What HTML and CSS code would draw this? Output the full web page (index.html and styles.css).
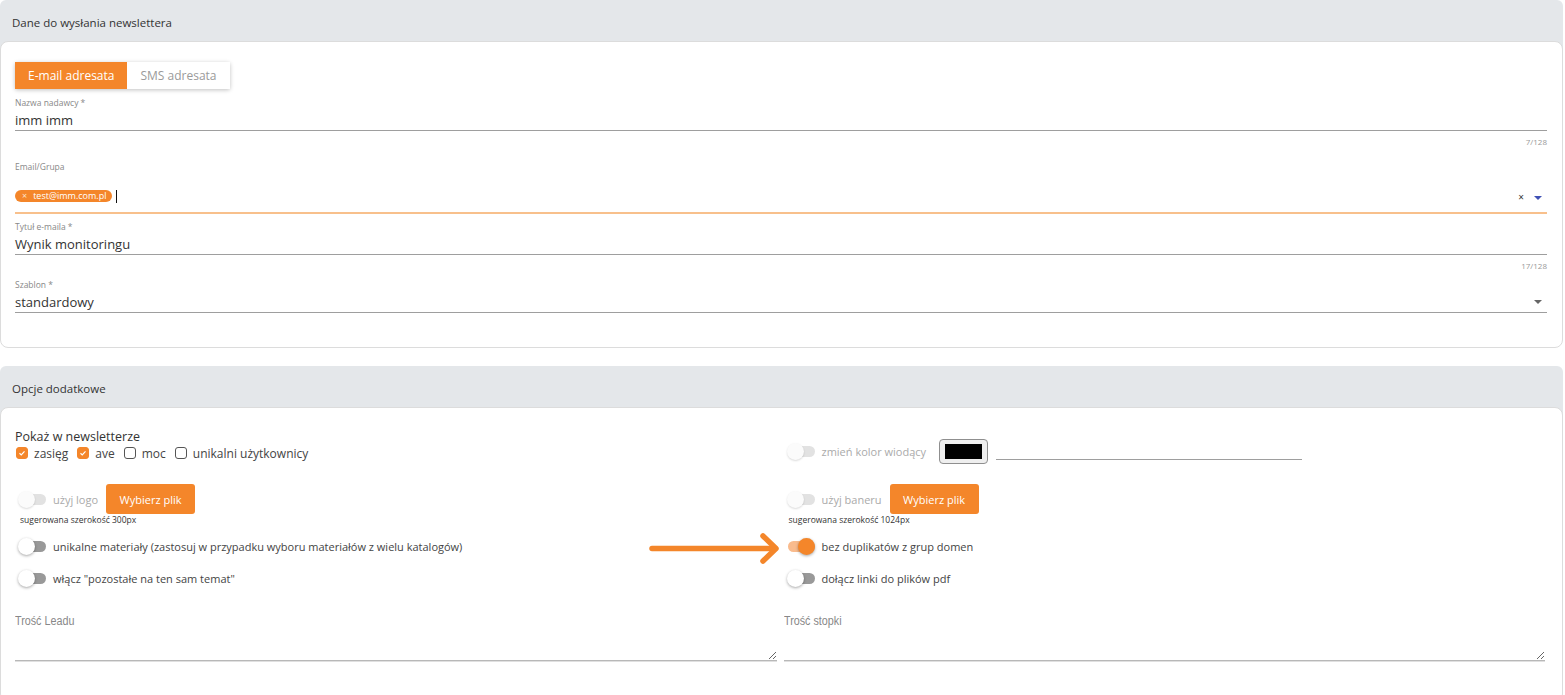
FILE: index.html
```html
<!DOCTYPE html>
<html>

<head>
  <title>Newsletter</title>
  <link rel="stylesheet" href="styles.css">
</head>

<body>
  <div class="page">
    <!-- dane do wysłania -->
    <section class="card">
      <div class="card-title">Dane do wysłania newslettera</div>
      <div class="card-body send">
        <div class="tabs">
          <span class="tab active">E-mail adresata</span>
          <span class="tab">SMS adresata</span>
        </div>

        <div class="field">
          <div class="field-label">Nazwa nadawcy *</div>
          <div class="field-input">imm imm</div>
          <div class="field-hint">7/128</div>
        </div>

        <div class="field field-email">
          <div class="field-label">Email/Grupa</div>
          <div class="field-input chips">
            <span class="chip"><span class="chip-x">×</span>test@imm.com.pl</span>
            <span class="cursor"></span>
            <span class="field-icons">
              <span class="clear">×</span>
              <span class="caret blue"></span>
            </span>
          </div>
        </div>

        <div class="field field-title">
          <div class="field-label">Tytuł e-maila *</div>
          <div class="field-input">Wynik monitoringu</div>
          <div class="field-hint">17/128</div>
        </div>

        <div class="field field-template">
          <div class="field-label">Szablon *</div>
          <div class="field-input select">
            <span>standardowy</span>
            <span class="field-icons"><span class="caret"></span></span>
          </div>
        </div>
      </div>
    </section>

    <!-- opcje -->
    <section class="card">
      <div class="card-title">Opcje dodatkowe</div>
      <div class="card-body options">
        <div class="opt-row first">
          <div>
            <div class="opt-title">Pokaż w newsletterze</div>
            <div class="checks">
              <span class="check on"><svg viewBox="0 0 12 12"><path d="M3 6.3l2.1 2L9 4" /></svg></span>
              <span class="check-label">zasięg</span>
              <span class="check on"><svg viewBox="0 0 12 12"><path d="M3 6.3l2.1 2L9 4" /></svg></span>
              <span class="check-label">ave</span>
              <span class="check"></span>
              <span class="check-label">moc</span>
              <span class="check"></span>
              <span class="check-label">unikalni użytkownicy</span>
            </div>
          </div>
          <div class="switch-row color-row">
            <span class="switch disabled"></span>
            <span class="switch-label muted">zmień kolor wiodący</span>
            <span class="color-box"><span></span></span>
            <span class="color-line"></span>
          </div>
        </div>

        <div class="opt-row files">
          <div>
            <div class="switch-row">
              <span class="switch disabled"></span>
              <span class="switch-label muted">użyj logo</span>
              <button class="file-button">Wybierz plik</button>
            </div>
            <div class="size-hint">sugerowana szerokość 300px</div>
          </div>
          <div>
            <div class="switch-row">
              <span class="switch disabled"></span>
              <span class="switch-label muted">użyj baneru</span>
              <button class="file-button">Wybierz plik</button>
            </div>
            <div class="size-hint">sugerowana szerokość 1024px</div>
          </div>
        </div>

        <div class="opt-row">
          <div class="switch-row">
            <span class="switch"></span>
            <span class="switch-label">unikalne materiały (zastosuj w przypadku wyboru materiałów z wielu katalogów)</span>
          </div>
          <div class="switch-row">
            <span class="switch on"></span>
            <span class="switch-label">bez duplikatów z grup domen</span>
          </div>
        </div>

        <div class="opt-row">
          <div class="switch-row">
            <span class="switch"></span>
            <span class="switch-label">włącz "pozostałe na ten sam temat"</span>
          </div>
          <div class="switch-row">
            <span class="switch"></span>
            <span class="switch-label">dołącz linki do plików pdf</span>
          </div>
        </div>

        <div class="opt-row texts">
          <div>
            <div class="ta-label">Trość Leadu</div>
            <textarea class="ta"></textarea>
          </div>
          <div>
            <div class="ta-label">Trość stopki</div>
            <textarea class="ta"></textarea>
          </div>
        </div>

        <!-- strzałka z adnotacji -->
        <svg class="arrow" width="136" height="36" viewBox="0 0 136 36">
          <path d="M4 17.5H127" />
          <path d="M115 5l13 12.5-13 12.5" />
        </svg>
      </div>
    </section>
  </div>
</body>

</html>
```

FILE: styles.css
```css
body,
html {
  margin: 0;
  background: #fff;
}

body {
  font-family: "Open Sans", "Liberation Sans", sans-serif;
  color: #444;
}

.page {
  width: 1563px;
}

/* karta */
.card {
  margin-bottom: 18px;
}

.card-title {
  background: #e4e7ea;
  border-radius: 6px 6px 0 0;
  font-size: 11.5px;
  line-height: 14px;
  color: #333;
  padding: 16px 12px 19px;
  margin-bottom: -8px;
}

.card-body {
  position: relative;
  background: #fff;
  border: 1px solid #dcdcdc;
  border-radius: 8px;
  padding: 20px 15px 0 14px;
}

.send {
  padding-bottom: 34px;
}

/* zakładki */
.tabs {
  display: inline-flex;
  box-shadow: 0 1px 4px rgba(0, 0, 0, 0.25);
  border-radius: 2px;
}

.tab {
  padding: 0 13px;
  line-height: 27px;
  font-size: 12px;
  color: #9a9a9a;
  background: #fff;
}

.tab.active {
  background: #f4862a;
  color: #fff;
}

/* pola formularza */
.field {
  margin-top: 9px;
}

.field-email {
  margin-top: 15px;
}

.field-title {
  margin-top: 8px;
}

.field-label {
  font-size: 8.5px;
  line-height: 10px;
  color: #888;
}

.field-input {
  display: flex;
  align-items: center;
  height: 20px;
  padding-top: 2px;
  line-height: 20px;
  font-size: 13px;
  color: #333;
  border-bottom: 1px solid #9e9e9e;
}

.field-hint {
  margin-top: 6px;
  font-size: 8px;
  line-height: 10px;
  color: #999;
  text-align: right;
}

.chips {
  height: 40px;
  padding: 0;
  align-items: flex-end;
  border-bottom: 2px solid #f8c08c;
}

.chips>* {
  margin-bottom: 10px;
}

.chip {
  display: inline-flex;
  align-items: center;
  height: 12px;
  padding: 0 6px 0 7px;
  border-radius: 6px;
  background: #f4862a;
  color: #fff;
  font-size: 9px;
  line-height: 12px;
}

.chip-x {
  margin-right: 6px;
  color: #fde3cc;
}

.cursor {
  width: 1px;
  height: 13px;
  background: #111;
  margin-left: 4px;
  margin-bottom: 9px !important;
}

.field-icons {
  margin-left: auto;
  display: flex;
  align-items: center;
  gap: 10px;
  margin-right: 5px;
}

.clear {
  font-size: 10px;
  line-height: 10px;
  color: #333;
}

.caret {
  width: 0;
  height: 0;
  border-left: 4px solid transparent;
  border-right: 4px solid transparent;
  border-top: 4px solid #666;
}

.caret.blue {
  border-top-color: #3f51b5;
  margin-top: 2px;
}

/* opcje dodatkowe */
.options {
  padding-top: 21px;
  padding-bottom: 40px;
}

.opt-row {
  display: grid;
  grid-template-columns: 1fr 1fr;
  column-gap: 5px;
  margin-top: 12px;
}

.opt-row.first {
  margin-top: 0;
}

.opt-row.files {
  margin-top: 20px;
}

.opt-title {
  font-size: 12.5px;
  line-height: 16px;
  color: #333;
}

.checks {
  display: flex;
  align-items: center;
  height: 16px;
  font-size: 12px;
  color: #444;
  padding-left: 1px;
}

.check {
  box-sizing: border-box;
  width: 12px;
  height: 12px;
  border: 1px solid #555;
  border-radius: 3px;
  margin-right: 6px;
}

.check.on {
  background: #f4862a;
  border-color: #f4862a;
}

.check svg {
  display: block;
  width: 10px;
  height: 10px;
}

.check svg path {
  fill: none;
  stroke: #fff;
  stroke-width: 1.4;
}

.check-label {
  margin-right: 9px;
}

.switch-row {
  display: flex;
  align-items: center;
  min-height: 20px;
  padding-left: 3px;
  font-size: 11px;
  color: #444;
}

.switch {
  position: relative;
  flex: none;
  width: 28px;
  height: 17px;
  margin-right: 7px;
}

.switch::before {
  content: "";
  position: absolute;
  left: 1px;
  right: 0;
  top: 3px;
  height: 11px;
  border-radius: 6px;
  background: #999;
}

.switch::after {
  content: "";
  position: absolute;
  left: 0;
  top: 0;
  width: 17px;
  height: 17px;
  border-radius: 50%;
  background: #fff;
  box-shadow: 0 1px 3px rgba(0, 0, 0, 0.35);
}

.switch.on::before {
  background: #f9bb8d;
}

.switch.on::after {
  left: 11px;
  background: #f4862a;
}

.switch.disabled::before {
  background: #e2e2e2;
}

.switch.disabled::after {
  background: #fbfbfb;
  box-shadow: 0 1px 2px rgba(0, 0, 0, 0.15);
}

.muted {
  color: #aaa;
}

.color-row {
  margin-top: 10px;
}

.color-box {
  box-sizing: border-box;
  width: 49px;
  height: 25px;
  margin-left: 13px;
  padding: 4px 5px;
  border: 1px solid #8f8f8f;
  border-radius: 4px;
  background: #efefef;
}

.color-box span {
  display: block;
  height: 100%;
  background: #000;
}

.color-line {
  width: 306px;
  height: 1px;
  margin: 16px 0 0 8px;
  background: #9e9e9e;
}

.file-button {
  width: 89px;
  height: 30px;
  margin-left: 8px;
  border: none;
  border-radius: 3px;
  background: #f4862a;
  color: #fff;
  font-family: inherit;
  font-size: 11px;
}

.size-hint {
  margin-top: 1px;
  padding-left: 5px;
  font-size: 8.5px;
  line-height: 9px;
  color: #333;
}

.texts {
  margin-top: 26px;
}

.ta-label {
  font-family: "Liberation Sans", sans-serif;
  font-size: 12.5px;
  line-height: 14px;
  color: #888;
  transform: scaleX(0.86);
  transform-origin: left center;
}

.ta {
  display: block;
  box-sizing: border-box;
  width: calc(100% - 2px);
  height: 33px;
  padding: 0;
  border: none;
  border-bottom: 1px solid #b8b8b8;
  box-shadow: 0 1px 0 #e0e0e0;
  resize: vertical;
  outline: none;
  font-family: inherit;
}

/* strzałka */
.arrow {
  position: absolute;
  left: 647px;
  top: 123px;
}

.arrow path {
  fill: none;
  stroke: #f4862a;
  stroke-width: 5.5;
  stroke-linecap: round;
  stroke-linejoin: round;
}
```
